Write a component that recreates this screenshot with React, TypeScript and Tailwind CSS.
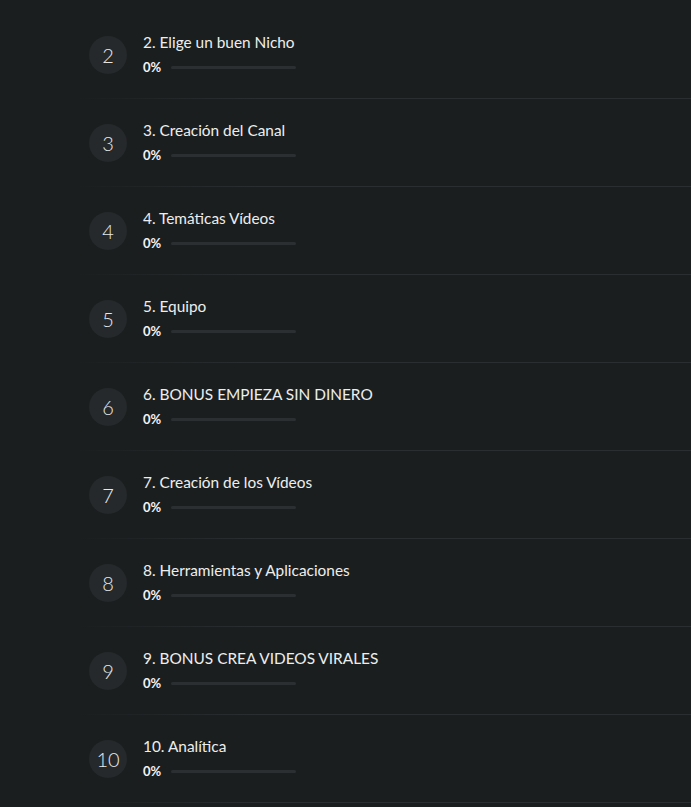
const lessons = [
  { n: 2, title: "2. Elige un buen Nicho" },
  { n: 3, title: "3. Creación del Canal" },
  { n: 4, title: "4. Temáticas Vídeos" },
  { n: 5, title: "5. Equipo" },
  { n: 6, title: "6. BONUS EMPIEZA SIN DINERO" },
  { n: 7, title: "7. Creación de los Vídeos" },
  { n: 8, title: "8. Herramientas y Aplicaciones" },
  { n: 9, title: "9. BONUS CREA VIDEOS VIRALES" },
  { n: 10, title: "10. Analítica" },
];

function LessonRow({ n, title }: { n: number; title: string }) {
  return (
    <div>
      <div className="flex h-[87px] items-center pl-[89px]">
        <div className="flex h-[38px] w-[38px] shrink-0 items-center justify-center rounded-full bg-[#25292b] text-[20px] font-light text-[#e6e8e8]">
          {n}
        </div>
        <div className="ml-[16px] flex flex-col">
          <span className="text-[15.4px] leading-[20px] text-[#eceeee]">{title}</span>
          <div className="mt-[5px] flex items-center">
            <span className="text-[13px] font-bold leading-[20px] text-[#f2f3f3]">0%</span>
            <div className="ml-[10px] h-[3px] w-[125px] rounded-full bg-[#2b2f31]" />
          </div>
        </div>
      </div>
      <div className="ml-[76px] h-px bg-gradient-to-r from-transparent via-[#2a2e30] via-30% to-[#2a2e30]" />
    </div>
  );
}

export default function App() {
  return (
    <div
      className="min-h-[807px] w-full bg-[#1b1e1f] pt-[11px]"
      style={{ fontFamily: "Lato, 'Noto Sans', sans-serif" }}
    >
      {lessons.map((l) => (
        <LessonRow key={l.n} n={l.n} title={l.title} />
      ))}
    </div>
  );
}
